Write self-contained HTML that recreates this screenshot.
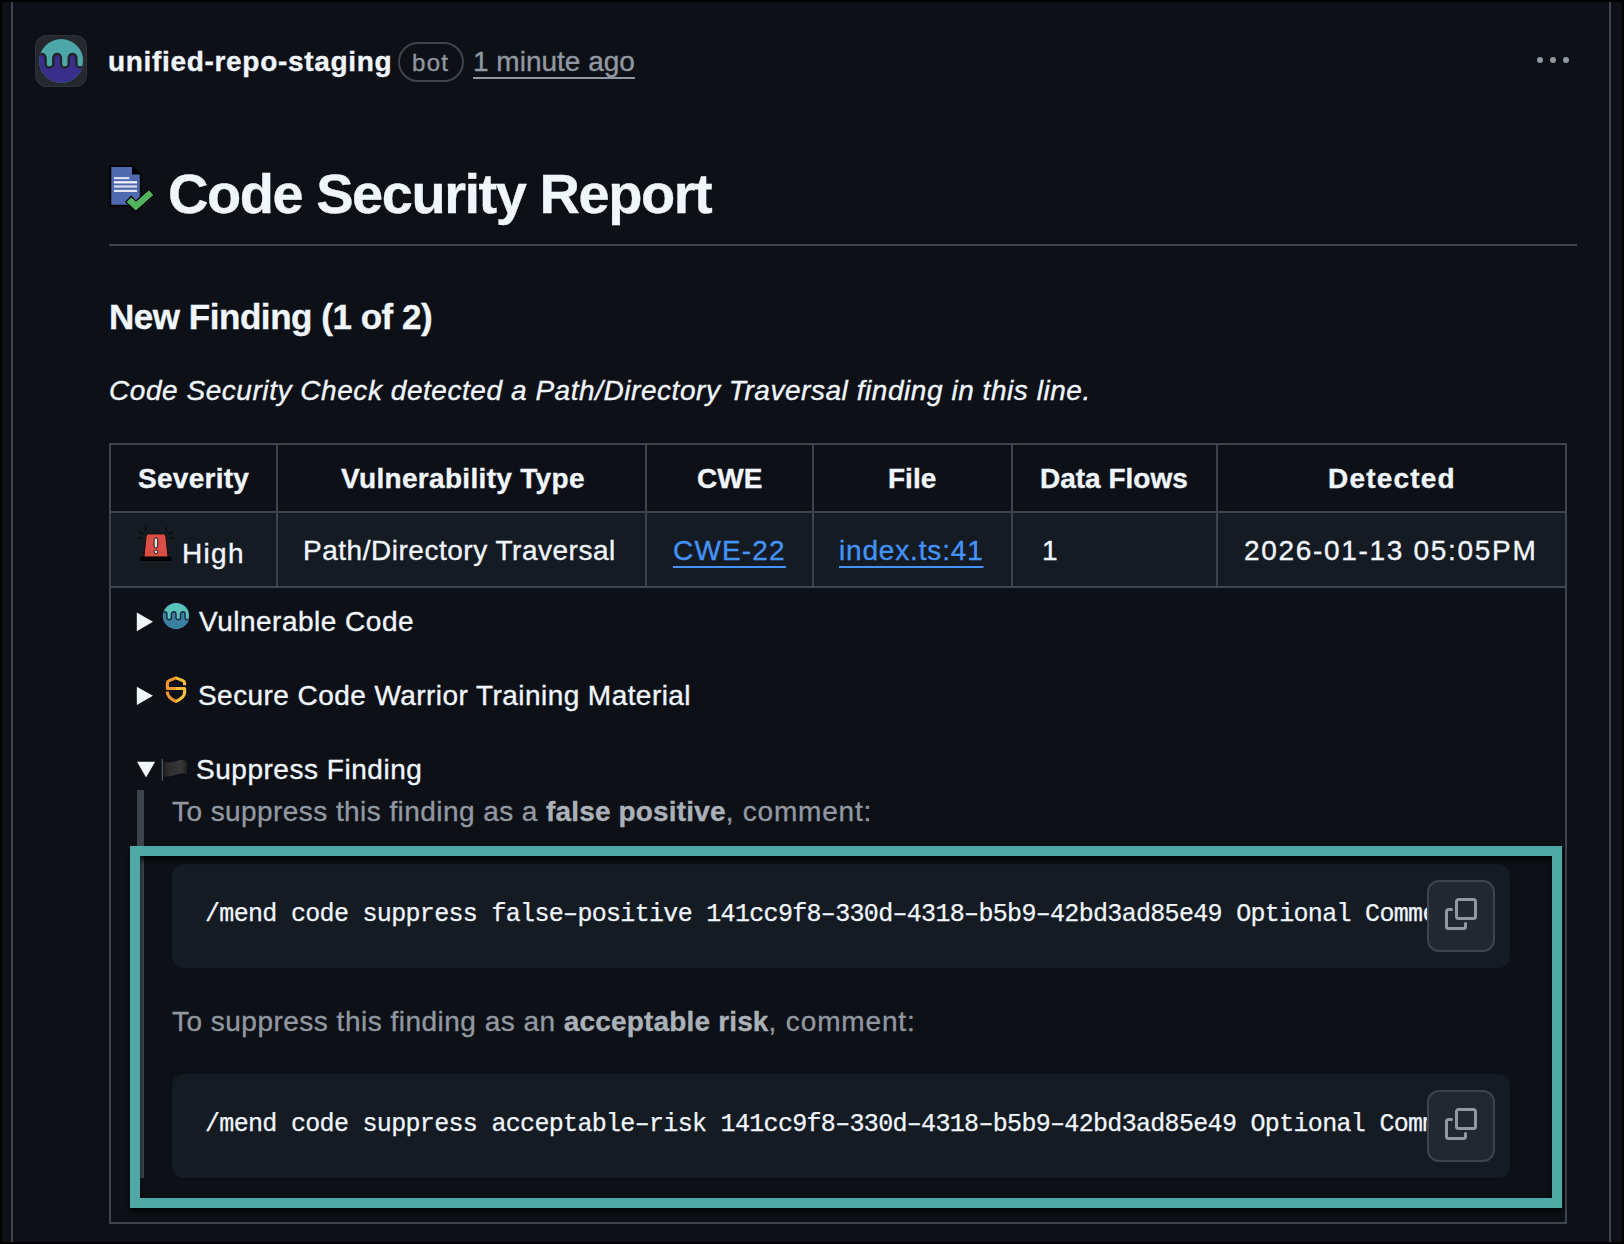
<!DOCTYPE html>
<html><head><meta charset="utf-8">
<style>
html,body{margin:0;padding:0}
body{width:1624px;height:1244px;position:relative;overflow:hidden;background:#000;font-family:"Liberation Sans",sans-serif;color:#f0f6fc}
#pg{position:absolute;left:2px;top:2px;width:1620px;height:1240px;background:#0d1117}
.a{position:absolute}
.t{position:absolute;white-space:pre;line-height:1;-webkit-text-stroke:0.35px currentColor}
.vl{position:absolute;top:2px;width:2px;height:1240px;background:#3d444d}
.b{font-weight:700}
.mut{color:#9198a1}
.bd{position:absolute;background:#3d444d}
.code{position:absolute;background:#151b23;border-radius:12px}
.ct{position:absolute;font-family:"Liberation Mono",monospace;font-size:25px;letter-spacing:-0.68px;line-height:1;white-space:pre;color:#f0f6fc;overflow:hidden;-webkit-text-stroke:0.25px #f0f6fc}
.btn{position:absolute;width:64px;height:68px;border:2px solid #3d444d;background:#212830;border-radius:12px}
</style></head><body>
<div id="pg"></div>
<div class="vl" style="left:11px"></div>
<div class="vl" style="left:1609px"></div>

<!-- avatar -->
<div class="a" style="left:35px;top:35px;width:52px;height:52px;border-radius:12px;background:#25282d;box-shadow:inset 0 0 0 1px #2f3338"></div>
<svg class="a" style="left:0;top:0" width="100" height="100" viewBox="0 0 100 100">
  <defs><clipPath id="av"><circle cx="61.2" cy="61" r="22"/></clipPath></defs>
  <circle cx="61.2" cy="61" r="22" fill="#4da6a8"/>
  <g clip-path="url(#av)">
    <path d="M32.60 57.92 L37.88 57.92 A3.85 3.85 0 0 1 45.58 57.92 L45.58 63.64 A3.85 3.85 0 0 0 53.28 63.64 L53.28 57.92 A3.85 3.85 0 0 1 60.98 57.92 L60.98 63.64 A3.85 3.85 0 0 0 68.68 63.64 L68.68 57.92 A3.85 3.85 0 0 1 76.38 57.92 L76.38 63.64 A3.85 3.85 0 0 0 84.08 63.64 L84.08 57.92 L89.80 57.92 L89.80 89.60 L32.60 89.60 Z" fill="#3a2e8c"/>
    <path d="M32.60 57.92 L37.88 57.92 A3.85 3.85 0 0 1 45.58 57.92 L45.58 63.64 A3.85 3.85 0 0 0 53.28 63.64 L53.28 57.92 A3.85 3.85 0 0 1 60.98 57.92 L60.98 63.64 A3.85 3.85 0 0 0 68.68 63.64 L68.68 57.92 A3.85 3.85 0 0 1 76.38 57.92 L76.38 63.64 A3.85 3.85 0 0 0 84.08 63.64 L84.08 57.92 L89.80 57.92" fill="none" stroke="#222429" stroke-width="2.4"/>
  </g>
</svg>

<div class="t b" style="left:108px;top:48px;font-size:28px;letter-spacing:0.68px">unified-repo-staging</div>
<div class="a" style="left:398px;top:42px;width:62px;height:36px;border:2px solid #3d444d;border-radius:20px"></div>
<div class="t mut" style="left:412px;top:51px;font-size:24px;letter-spacing:1.3px">bot</div>
<div class="t mut" style="left:473px;top:48px;font-size:28px;text-decoration:underline;text-decoration-skip-ink:none;text-underline-offset:6px">1 minute ago</div>
<div class="a" style="left:1537px;top:57px;width:6px;height:6px;border-radius:50%;background:#9198a1"></div>
<div class="a" style="left:1550px;top:57px;width:6px;height:6px;border-radius:50%;background:#9198a1"></div>
<div class="a" style="left:1563px;top:57px;width:6px;height:6px;border-radius:50%;background:#9198a1"></div>

<!-- title -->
<svg class="a" style="left:100px;top:160px" width="60" height="60" viewBox="100 160 60 60">
  <path d="M109.5 165.5 L133 165.5 L141.5 174 L141.5 206.5 L109.5 206.5 Z" fill="#000"/>
  <path d="M111.3 167 L132 167 L132 174.5 L139.8 174.5 L139.8 204.8 L111.3 204.8 Z" fill="#4f6aae"/>
  <rect x="114" y="177" width="15.3" height="2.2" fill="#d9ddee"/>
  <rect x="114" y="181.2" width="23" height="2.2" fill="#f4f6fb"/>
  <rect x="114" y="185.4" width="23" height="2.2" fill="#d9ddee"/>
  <rect x="114" y="189.8" width="23" height="2.2" fill="#e3e7f2"/>
  
  <polyline points="128.05,198.8 135.9,206.2 151.97,191.8" fill="none" stroke="#000" stroke-width="8.9" stroke-linejoin="miter" stroke-miterlimit="10"/><polyline points="128.85,199.55 135.9,206.2 151.15,192.55" fill="none" stroke="#52b45f" stroke-width="6.5" stroke-linejoin="miter" stroke-miterlimit="10"/>
</svg>
<div class="t b" style="left:168px;top:166px;font-size:56px;letter-spacing:-1.47px">Code Security Report</div>
<div class="bd" style="left:109px;top:244px;width:1468px;height:2px"></div>

<div class="t b" style="left:109px;top:299px;font-size:35px;letter-spacing:-0.46px">New Finding (1 of 2)</div>
<div class="t" style="left:109px;top:377px;font-size:28px;font-style:italic;letter-spacing:0.55px">Code Security Check detected a Path/Directory Traversal finding in this line.</div>

<!-- table -->
<div class="a" style="left:111px;top:513px;width:1454px;height:73px;background:#151b23"></div>
<div class="bd" style="left:109px;top:443px;width:1458px;height:2px"></div>
<div class="bd" style="left:109px;top:511px;width:1458px;height:2px"></div>
<div class="bd" style="left:109px;top:586px;width:1458px;height:2px"></div>
<div class="bd" style="left:109px;top:1222px;width:1458px;height:2px"></div>
<div class="bd" style="left:109px;top:443px;width:2px;height:781px"></div>
<div class="bd" style="left:1565px;top:443px;width:2px;height:781px"></div>
<div class="bd" style="left:276px;top:443px;width:2px;height:145px"></div>
<div class="bd" style="left:645px;top:443px;width:2px;height:145px"></div>
<div class="bd" style="left:812px;top:443px;width:2px;height:145px"></div>
<div class="bd" style="left:1011px;top:443px;width:2px;height:145px"></div>
<div class="bd" style="left:1216px;top:443px;width:2px;height:145px"></div>

<div class="t b" style="left:138px;top:465px;font-size:28px;letter-spacing:0.27px">Severity</div>
<div class="t b" style="left:341px;top:465px;font-size:28px;letter-spacing:0.32px">Vulnerability Type</div>
<div class="t b" style="left:697px;top:465px;font-size:28px">CWE</div>
<div class="t b" style="left:888px;top:465px;font-size:28px">File</div>
<div class="t b" style="left:1040px;top:465px;font-size:28px">Data Flows</div>
<div class="t b" style="left:1328px;top:465px;font-size:28px;letter-spacing:1.2px">Detected</div>

<div class="t" style="left:182px;top:540px;font-size:28px;letter-spacing:1.3px">High</div>
<div class="t" style="left:303px;top:537px;font-size:28px;letter-spacing:0.52px">Path/Directory Traversal</div>
<div class="t" style="left:673px;top:537px;font-size:28px;letter-spacing:1.18px;color:#4493f8;text-decoration:underline;text-decoration-skip-ink:none;text-underline-offset:6px">CWE-22</div>
<div class="t" style="left:839px;top:537px;font-size:28px;letter-spacing:0.83px;color:#4493f8;text-decoration:underline;text-decoration-skip-ink:none;text-underline-offset:6px">index.ts:41</div>
<div class="t" style="left:1042px;top:537px;font-size:28px">1</div>
<div class="t" style="left:1244px;top:537px;font-size:28px;letter-spacing:1.69px">2026-01-13 05:05PM</div>


<!-- siren -->
<svg class="a" style="left:130px;top:520px" width="50" height="50" viewBox="130 520 50 50">
  <g stroke="#050505" stroke-width="1.4" stroke-linecap="round" opacity=".7">
    <line x1="145.3" y1="527.2" x2="145.9" y2="530.5"/><line x1="139.6" y1="531.8" x2="142.7" y2="533.7"/><line x1="137.9" y1="537.8" x2="142" y2="538.1"/>
    <line x1="166.5" y1="527.2" x2="165.9" y2="530.5"/><line x1="172.2" y1="531.8" x2="169.1" y2="533.7"/><line x1="173.9" y1="537.8" x2="169.8" y2="538.1"/>
  </g>
  <path d="M148.6 533.9 L163.3 533.9 Q165.5 533.9 165.8 536 L168.1 557.3 L143.9 557.3 L146.1 536 Q146.4 533.9 148.6 533.9 Z" fill="#d94f46" stroke="#1a0a0a" stroke-width="1"/>
  <rect x="140.3" y="556.6" width="31.3" height="4.3" rx="2" fill="#000"/>
  <rect x="154.1" y="537.9" width="3.6" height="10" rx="1.8" fill="#e2e2e2" stroke="#111" stroke-width=".9"/>
  <circle cx="155.9" cy="551.8" r="1.9" fill="#d8d8d8" stroke="#111" stroke-width=".9"/>
</svg>
<!-- disclosure triangles -->
<svg class="a" style="left:130px;top:600px" width="40" height="190" viewBox="130 600 40 190">
  <path d="M136.8 612.4 L153 621.8 L136.8 631.2 Z" fill="#f0f6fc"/>
  <path d="M136.8 686.7 L153 695.85 L136.8 705 Z" fill="#f0f6fc"/>
  <path d="M137 761.8 L155.1 761.8 L146.1 777.5 Z" fill="#f0f6fc"/>
</svg>
<!-- small mend logo -->
<svg class="a" style="left:158px;top:598px" width="36" height="36" viewBox="158 598 36 36">
  <defs><clipPath id="ml"><circle cx="176.1" cy="615.9" r="13"/></clipPath></defs>
  <circle cx="176.1" cy="615.9" r="13.6" fill="#1b1b3a"/>
  <circle cx="176.1" cy="615.9" r="13" fill="#5ac4b9"/>
  <g clip-path="url(#ml)">
    <path d="M159.20 614.08 L162.32 614.08 A2.27 2.27 0 0 1 166.87 614.08 L166.87 617.46 A2.27 2.27 0 0 0 171.42 617.46 L171.42 614.08 A2.27 2.27 0 0 1 175.97 614.08 L175.97 617.46 A2.27 2.27 0 0 0 180.52 617.46 L180.52 614.08 A2.27 2.27 0 0 1 185.07 614.08 L185.07 617.46 A2.27 2.27 0 0 0 189.62 617.46 L189.62 614.08 L193.00 614.08 L193.00 632.80 L159.20 632.80 Z" fill="#3a80a2"/>
    <path d="M159.20 614.08 L162.32 614.08 A2.27 2.27 0 0 1 166.87 614.08 L166.87 617.46 A2.27 2.27 0 0 0 171.42 617.46 L171.42 614.08 A2.27 2.27 0 0 1 175.97 614.08 L175.97 617.46 A2.27 2.27 0 0 0 180.52 617.46 L180.52 614.08 A2.27 2.27 0 0 1 185.07 614.08 L185.07 617.46 A2.27 2.27 0 0 0 189.62 617.46 L189.62 614.08 L193.00 614.08" fill="none" stroke="#1d2a45" stroke-width="1.5"/>
  </g>
</svg>
<!-- SCW shield -->
<svg class="a" style="left:160px;top:672px" width="32" height="36" viewBox="160 672 32 36">
  <defs><linearGradient id="scw" x1="0" x2="1" y1="0" y2="0"><stop offset="0.5" stop-color="#f0952f"/><stop offset="0.5" stop-color="#f6bf3b"/></linearGradient></defs>
  <path d="M184.6 685.3 L184.6 683.2 Q184.6 681.4 182.8 680.6 L175.9 677.9 L169.2 680.6 Q167.4 681.4 167.4 683.2 L167.4 688.5 L184.6 688.5 L184.6 692.5 Q184.6 697.5 175.9 701.4 Q167.4 697.5 167.4 692.5 L167.4 691.4" fill="none" stroke="url(#scw)" stroke-width="3.1" stroke-linejoin="round"/>
</svg>
<!-- flag -->
<svg class="a" style="left:158px;top:754px" width="34" height="30" viewBox="158 754 34 30">
  <defs><linearGradient id="fl" x1="0" x2="1" y1="0" y2="0"><stop offset="0" stop-color="#1e1e1e"/><stop offset=".25" stop-color="#2e2e2e"/><stop offset=".75" stop-color="#383838"/><stop offset="1" stop-color="#202020"/></linearGradient></defs>
  <rect x="161.7" y="759" width="1.3" height="21.8" rx=".6" fill="#4e5763"/>
  <path d="M163.2 761.9 Q172 763.2 178 760.5 Q183 758.6 186.9 761.2 L186.9 774.6 Q182.5 772.6 177 774.6 Q171 776.8 163.2 776.8 Z" fill="url(#fl)"/>
</svg>
<!-- summaries -->
<div class="t" style="left:199px;top:608px;font-size:28px;letter-spacing:0.5px">Vulnerable Code</div>
<div class="t" style="left:198px;top:682px;font-size:28px;letter-spacing:0.44px">Secure Code Warrior Training Material</div>
<div class="t" style="left:196px;top:756px;font-size:28px;letter-spacing:0.53px">Suppress Finding</div>

<!-- blockquote -->
<div class="a" style="left:137px;top:790px;width:7px;height:388px;background:#3d444d"></div>
<div class="t mut" style="left:172px;top:798px;font-size:28px;letter-spacing:0.43px">To suppress this finding as a <b style="color:#aab1b9;letter-spacing:0.16px">false positive</b><span style="letter-spacing:0.8px">, comment:</span></div>
<div class="code" style="left:172px;top:864px;width:1338px;height:104px"></div>
<div class="ct" style="left:205px;top:902px;width:1223px">/mend code suppress false&#8211;positive 141cc9f8&#8211;330d&#8211;4318&#8211;b5b9&#8211;42bd3ad85e49 Optional Comment</div>
<div class="btn" style="left:1427px;top:880px"></div>
<svg class="a" style="left:1445px;top:898px" width="32" height="32" viewBox="0 0 16 16" fill="#9198a1"><path d="M0 6.75C0 5.784.784 5 1.75 5h1.5a.75.75 0 0 1 0 1.5h-1.5a.25.25 0 0 0-.25.25v7.5c0 .138.112.25.25.25h7.5a.25.25 0 0 0 .25-.25v-1.5a.75.75 0 0 1 1.5 0v1.5A1.75 1.75 0 0 1 9.25 16h-7.5A1.75 1.75 0 0 1 0 14.25Z"/><path d="M5 1.75C5 .784 5.784 0 6.75 0h7.5C15.216 0 16 .784 16 1.75v7.5A1.75 1.75 0 0 1 14.25 11h-7.5A1.75 1.75 0 0 1 5 9.25Zm1.75-.25a.25.25 0 0 0-.25.25v7.5c0 .138.112.25.25.25h7.5a.25.25 0 0 0 .25-.25v-7.5a.25.25 0 0 0-.25-.25Z"/></svg>
<div class="t mut" style="left:172px;top:1008px;font-size:28px;letter-spacing:0.49px">To suppress this finding as an <b style="color:#aab1b9;letter-spacing:0.16px">acceptable risk</b><span style="letter-spacing:0.85px">, comment:</span></div>
<div class="code" style="left:172px;top:1074px;width:1338px;height:104px"></div>
<div class="ct" style="left:205px;top:1112px;width:1223px">/mend code suppress acceptable&#8211;risk 141cc9f8&#8211;330d&#8211;4318&#8211;b5b9&#8211;42bd3ad85e49 Optional Comment</div>
<div class="btn" style="left:1427px;top:1090px"></div>
<svg class="a" style="left:1445px;top:1108px" width="32" height="32" viewBox="0 0 16 16" fill="#9198a1"><path d="M0 6.75C0 5.784.784 5 1.75 5h1.5a.75.75 0 0 1 0 1.5h-1.5a.25.25 0 0 0-.25.25v7.5c0 .138.112.25.25.25h7.5a.25.25 0 0 0 .25-.25v-1.5a.75.75 0 0 1 1.5 0v1.5A1.75 1.75 0 0 1 9.25 16h-7.5A1.75 1.75 0 0 1 0 14.25Z"/><path d="M5 1.75C5 .784 5.784 0 6.75 0h7.5C15.216 0 16 .784 16 1.75v7.5A1.75 1.75 0 0 1 14.25 11h-7.5A1.75 1.75 0 0 1 5 9.25Zm1.75-.25a.25.25 0 0 0-.25.25v7.5c0 .138.112.25.25.25h7.5a.25.25 0 0 0 .25-.25v-7.5a.25.25 0 0 0-.25-.25Z"/></svg>

<!-- teal annotation -->
<div class="a" style="left:130px;top:846px;width:1412px;height:342px;border:10px solid #4faaa7;filter:drop-shadow(0 5px 2.5px rgba(0,0,0,.7))"></div>
</body></html>
